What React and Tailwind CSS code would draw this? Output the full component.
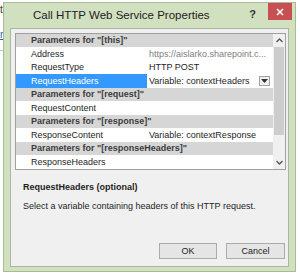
import React from "react";

const rows = [
  { h: 'Parameters for "[this]"' },
  { n: "Address", v: "https://aislarko.sharepoint.c...", gray: true },
  { n: "RequestType", v: "HTTP POST" },
  { n: "RequestHeaders", v: "Variable: contextHeaders", sel: true },
  { h: 'Parameters for "[request]"' },
  { n: "RequestContent", v: "" },
  { h: 'Parameters for "[response]"' },
  { n: "ResponseContent", v: "Variable: contextResponse" },
  { h: 'Parameters for "[responseHeaders]"' },
  { n: "ResponseHeaders", v: "" },
];

function Row({ r, i }) {
  const hc = i % 2 === 0 ? "h-[13px]" : "h-[14px]";
  if (r.h) {
    return (
      <div className={`${hc} flex items-center bg-[#d6d6d6] pl-[15px] font-bold text-[#3c3c3c]`}>
        {r.h}
      </div>
    );
  }
  return (
    <div className={`${hc} flex bg-white`}>
      <div
        className={`w-[131px] flex items-center pl-[15px] ${
          r.sel ? "bg-[#3399ff] text-white" : "text-[#1e1e1e]"
        }`}
      >
        {r.n}
      </div>
      <div
        className={`flex-1 flex items-center pl-[2px] whitespace-nowrap overflow-hidden ${
          r.gray ? "text-[#808080]" : "text-[#1e1e1e]"
        }`}
      >
        <span className="flex-1">{r.v}</span>
        {r.sel && (
          <span className="mr-[3px] w-[11px] h-[10px] border border-[#a0a0a0] bg-[#f0f0f0] flex items-center justify-center">
            <svg width="7" height="4" viewBox="0 0 7 4">
              <path d="M0 0 L7 0 L3.5 4 Z" fill="#333" />
            </svg>
          </span>
        )}
      </div>
    </div>
  );
}

export default function App() {
  return (
    <div
      className="relative w-[300px] h-[274px] bg-white overflow-hidden text-[9px] leading-none"
      style={{ fontFamily: '"Liberation Sans", Arial, sans-serif' }}
    >
      {/* background page fragments */}
      <div className="absolute left-0 top-[5px] text-[10px] text-[#333]">t</div>
      <div className="absolute left-0 top-[30px] text-[10px] text-[#3060b0] underline">r</div>
      <div className="absolute left-0 top-[50px] w-[3px] h-px bg-[#c8c8c8]" />

      {/* dialog */}
      <div className="absolute left-[3px] top-[2px] w-[293px] h-[270px] border border-[#a7bb95] bg-[#d1e1bf] flex flex-col">
        {/* title bar */}
        <div className="h-[25px] flex items-start">
          <div className="flex-1 pl-[29px] pt-[7px] text-[11.5px] text-[#222]">
            Call HTTP Web Service Properties
          </div>
          <div className="pt-[6px] pr-[12px] text-[11px] font-bold text-[#333]">?</div>
          <div className="mr-[3px] w-[24px] h-[17px] bg-[#c75050] flex items-center justify-center">
            <svg width="8" height="8" viewBox="0 0 8 8">
              <path d="M1 1 L7 7 M7 1 L1 7" stroke="white" strokeWidth="1.6" />
            </svg>
          </div>
        </div>
        {/* content */}
        <div className="mx-[6px] h-[239px] border border-[#a9b89c] bg-[#f0f0f0] flex flex-col">
          {/* property grid */}
          <div className="ml-[4px] mt-[4px] w-[271px] h-[137px] border border-[#a0a0a0] bg-white flex">
            <div className="flex-1 flex flex-col">
              {rows.map((r, i) => (
                <Row key={i} r={r} i={i} />
              ))}
            </div>
            <div className="w-[12px] flex flex-col bg-[#f0f0f0]">
              <div className="h-[13px] flex items-center justify-center">
                <svg width="7" height="5" viewBox="0 0 7 5">
                  <path d="M0.5 4 L3.5 1 L6.5 4" stroke="#555" strokeWidth="1.3" fill="none" />
                </svg>
              </div>
              <div className="mx-px h-[88px] bg-[#cdcdcd]" />
              <div className="flex-1" />
              <div className="h-[13px] flex items-center justify-center">
                <svg width="7" height="5" viewBox="0 0 7 5">
                  <path d="M0.5 1 L3.5 4 L6.5 1" stroke="#555" strokeWidth="1.3" fill="none" />
                </svg>
              </div>
            </div>
          </div>
          {/* description */}
          <div className="pl-[12px] pt-[13px] font-bold text-[#1e1e1e]">RequestHeaders (optional)</div>
          <div className="pl-[12px] pt-[10px] text-[#1e1e1e]">
            Select a variable containing headers of this HTTP request.
          </div>
          <div className="flex-1" />
          {/* buttons */}
          <div className="flex justify-end gap-[9px] pr-[3px] mb-[7px]">
            <button className="w-[58px] h-[16px] border border-[#acacac] bg-[#e5e5e5] text-[#1e1e1e] text-[9px]">
              OK
            </button>
            <button className="w-[59px] h-[16px] border border-[#acacac] bg-[#e5e5e5] text-[#1e1e1e] text-[9px]">
              Cancel
            </button>
          </div>
        </div>
      </div>
    </div>
  );
}
